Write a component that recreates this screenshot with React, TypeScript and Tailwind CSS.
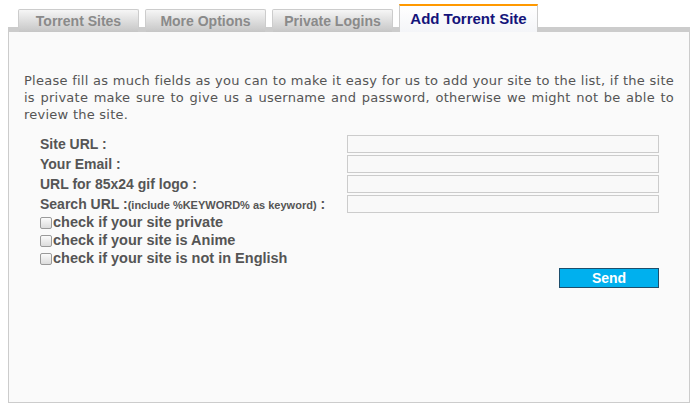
import React from 'react'

const tabs = ['Torrent Sites', 'More Options', 'Private Logins']

const fields = [
  { label: 'Site URL :' },
  { label: 'Your Email :' },
  { label: 'URL for 85x24 gif logo :' },
  { label: 'Search URL :', hint: '(include %KEYWORD% as keyword)' },
]

const checks = [
  'check if your site private',
  'check if your site is Anime',
  'check if your site is not in English',
]

export default function App() {
  return (
    <div className="w-[695px] h-[411px] bg-white font-['Liberation_Sans',Arial,sans-serif]">
      {/* Tabs */}
      <div className="flex items-end gap-[6px] pl-[18px] pt-[4px] h-[32px] relative z-10">
        {tabs.map((t) => (
          <div
            key={t}
            className="w-[121px] h-[23px] border border-b-0 border-[#cccccc] rounded-t-[2px] bg-gradient-to-b from-[#f6f6f6] to-[#c6c6c6] text-[#8a8a8a] font-bold text-[14px] leading-[22px] text-center"
          >
            {t}
          </div>
        ))}
        <div className="w-[139px] h-[28px] border-t-2 border-t-[#ff9900] border-x border-x-[#cccccc] bg-gradient-to-b from-white to-[#f4f5f8] text-[#14147a] font-bold text-[15px] leading-[26px] text-center">
          Add Torrent Site
        </div>
      </div>

      {/* Panel */}
      <div className="ml-[8px] w-[682px] h-[376px] -mt-[5px] border-t-[5px] border-x border-b border-[#cccccc] bg-[#fafafa] px-[15px] pt-[40px]">
        <p className="font-['DejaVu_Sans',Verdana,sans-serif] text-[13px] tracking-[0.25px] leading-[17px] text-[#555555] text-justify">
          Please fill as much fields as you can to make it easy for us to add your site to the list, if the site is private make sure to give us a username and password, otherwise we might not be able to review the site.
        </p>

        <div className="mt-[11px] pl-[16px] pr-[15px]">
          {fields.map((f) => (
            <div key={f.label} className="flex items-center justify-between h-[20px]">
              <span className="text-[14px] font-bold text-[#555555]">
                {f.label}
                {f.hint && (
                  <>
                    <span className="text-[11px]">{f.hint}</span>
                    <span> :</span>
                  </>
                )}
              </span>
              <div className="w-[312px] h-[18px] border border-[#cccccc] bg-[#f9f9f9]" />
            </div>
          ))}

          {checks.map((c) => (
            <div key={c} className="flex items-center h-[18px]">
              <span className="w-[12px] h-[12px] mr-[1px] rounded-[2px] border border-[#9a9a9a] bg-gradient-to-b from-[#fbfbfb] to-[#dcdcdc]" />
              <span className="text-[14.5px] font-bold text-[#555555]">{c}</span>
            </div>
          ))}

          <div className="flex justify-end mt-0">
            <button className="w-[100px] h-[20px] bg-[#00b0ee] border border-[#1d4e6c] text-white font-bold text-[14px] leading-[18px]">
              Send
            </button>
          </div>
        </div>
      </div>
    </div>
  )
}
